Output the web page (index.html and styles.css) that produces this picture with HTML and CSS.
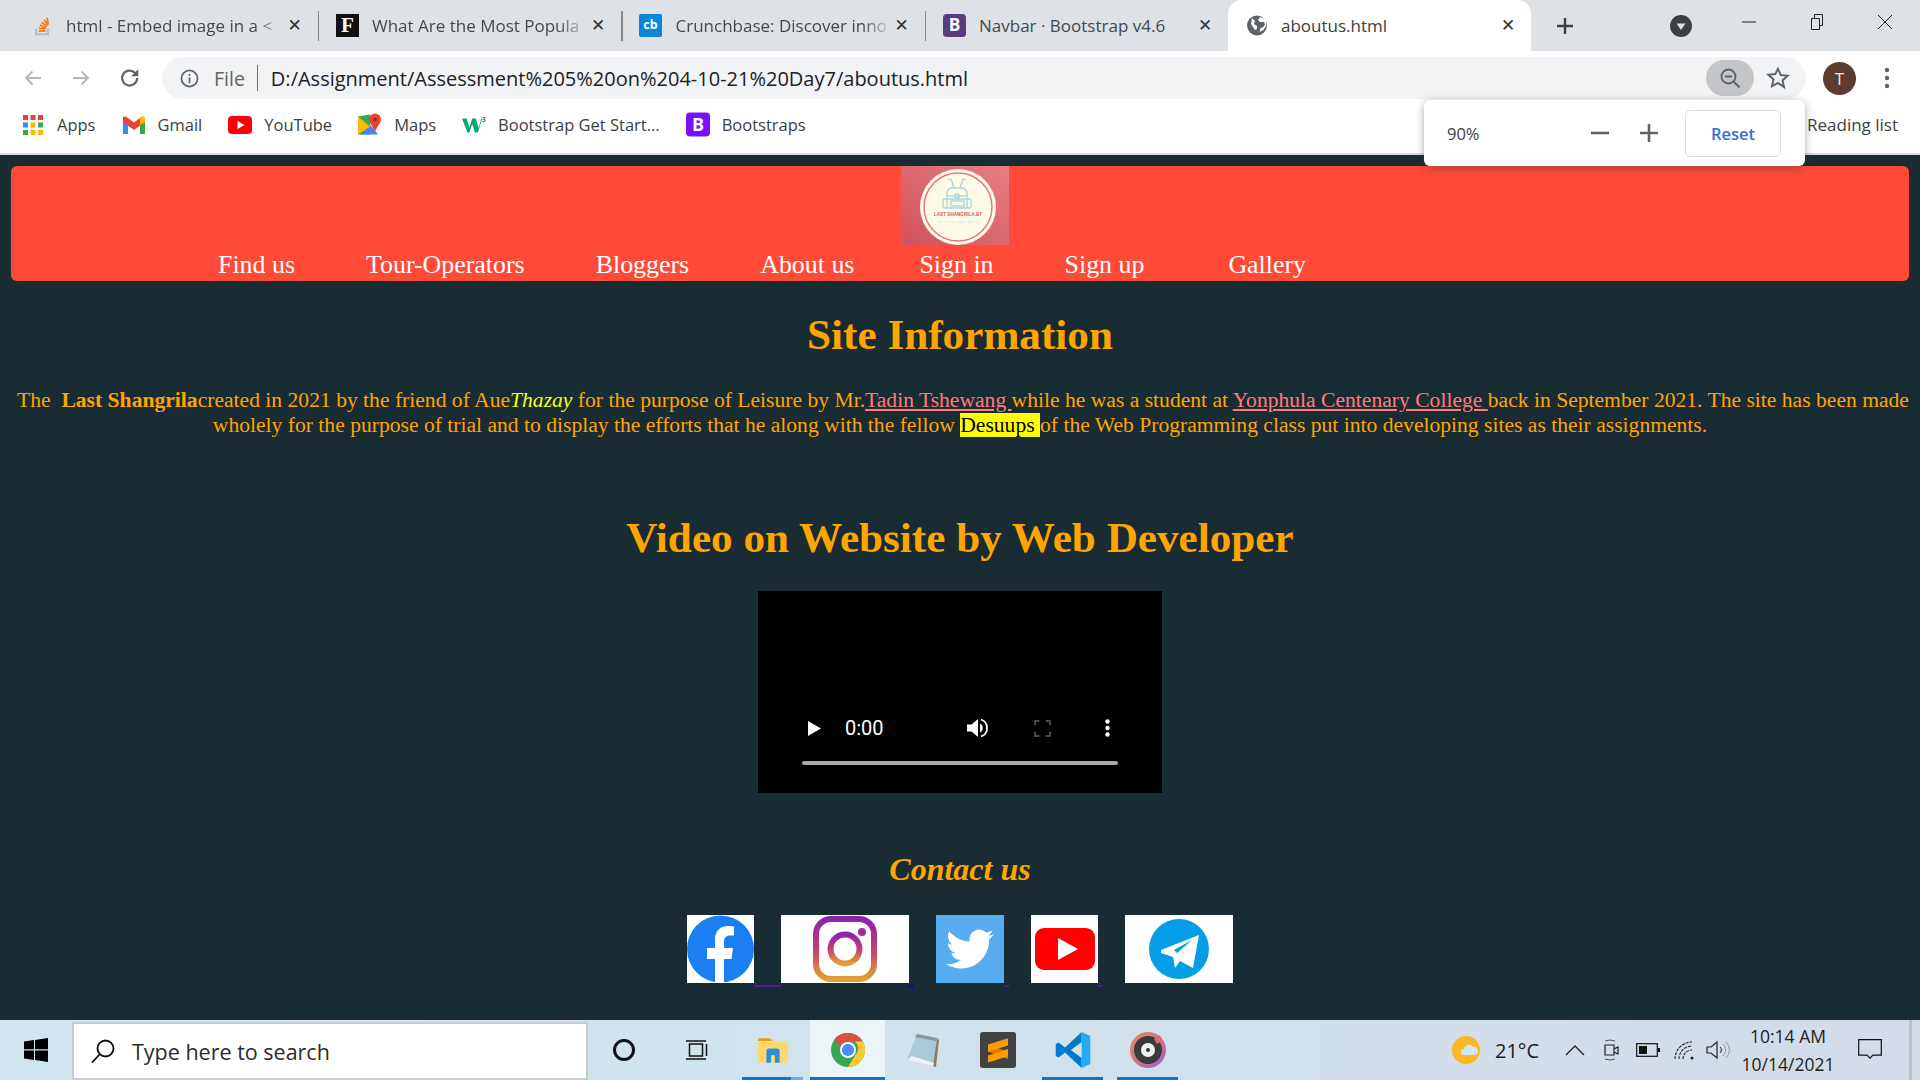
FILE: index.html
```html
<!DOCTYPE html>
<html lang="en">
<head>
<meta charset="utf-8">
<title>aboutus.html</title>
<link rel="stylesheet" href="styles.css">
</head>
<body>
<header class="chrome">
  <div class="tabstrip">
    <div class="tab">
      <svg class="fav" viewBox="0 0 24 24"><path d="M5 15v7h14v-7" fill="none" stroke="#bcbbbb" stroke-width="2.4"/><path d="M8 18h8M8.300 14.500l8 1M9.500 11l7.500 3.200M11.500 7.500l6.500 4.800M14.500 4.500l4.800 6.500M18 2l1.500 8" stroke="#f48024" stroke-width="2.200" fill="none"/></svg>
      <span class="tab-title">html - Embed image in a &lt;</span><span class="x">✕</span>
    </div>
    <span class="tab-sep"></span>
    <div class="tab">
      <svg class="fav big" viewBox="0 0 24 24"><rect width="24" height="24" fill="#111"/><text x="12" y="19" text-anchor="middle" class="fav-f">F</text></svg>
      <span class="tab-title">What Are the Most Popula</span><span class="x">✕</span>
    </div>
    <span class="tab-sep"></span>
    <div class="tab">
      <svg class="fav big" viewBox="0 0 24 24"><rect width="24" height="24" rx="2" fill="#0a86d8"/><text x="12" y="16" text-anchor="middle" class="fav-cb">cb</text></svg>
      <span class="tab-title">Crunchbase: Discover inno</span><span class="x">✕</span>
    </div>
    <span class="tab-sep"></span>
    <div class="tab">
      <svg class="fav big" viewBox="0 0 24 24"><rect width="24" height="24" rx="4" fill="#563d7c"/><text x="12" y="18" text-anchor="middle" class="fav-b">B</text></svg>
      <span class="tab-title plain">Navbar · Bootstrap v4.6</span><span class="x">✕</span>
    </div>
    <div class="tab active">
      <svg class="fav globe" viewBox="0 0 20 20"><circle cx="10" cy="10" r="10" fill="#5f6368"/><path d="M5 2.500l3 3-1 3 3 2v3l-2 1-4-6zM13 1.500l-2 3 2 2 4 0 1 2-1.500 3-3 1-1 4 4-2 3-5-1-6z" fill="#fff"/></svg>
      <span class="tab-title plain">aboutus.html</span><span class="x">✕</span>
    </div>
    <span class="newtab">
      <svg viewBox="0 0 18 18" width="18" height="18"><path d="M9 1v16M1 9h16" stroke="#3c4043" stroke-width="2.400"/></svg>
    </span>
    <span class="strip-space"></span>
    <svg class="tabsearch" viewBox="0 0 22 22"><circle cx="11" cy="11" r="11" fill="#3c4043"/><path d="M6.500 8.500h9L11 15z" fill="#dee1e6"/></svg>
    <div class="winctl">
      <svg viewBox="0 0 16 16" width="16" height="16"><path d="M1 8h14" stroke="#222" stroke-width="1"/></svg>
      <svg viewBox="0 0 16 18" width="16" height="18"><path d="M2.500 5.500h8v11h-8zM5.500 5.500v-4h8v11h-3" fill="none" stroke="#222" stroke-width="1"/></svg>
      <svg viewBox="0 0 16 16" width="16" height="16"><path d="M1 1l14 14M15 1L1 15" stroke="#222" stroke-width="1"/></svg>
    </div>
  </div>
  <div class="toolbar">
    <svg class="nav-ico" viewBox="0 0 20 20"><path d="M18 10H3M9.500 3.500L3 10l6.500 6.500" fill="none" stroke="#b4b7bb" stroke-width="1.800"/></svg>
    <svg class="nav-ico" viewBox="0 0 20 20"><path d="M2 10h15M10.500 3.500L17 10l-6.500 6.500" fill="none" stroke="#b4b7bb" stroke-width="1.800"/></svg>
    <svg class="nav-ico" viewBox="0 0 20 20"><path d="M16.500 10a6.800 6.800 0 1 1-2-4.800L17 7.700" fill="none" stroke="#5f6368" stroke-width="2"/><path d="M17.500 2v6.500H11z" fill="#5f6368"/></svg>
    <div class="omnibox">
      <svg class="info" viewBox="0 0 20 20"><circle cx="10" cy="10" r="8.500" fill="none" stroke="#5f6368" stroke-width="1.800"/><path d="M10 9v6M10 5.200v2" stroke="#5f6368" stroke-width="1.800"/></svg>
      <span class="file">File</span>
      <span class="omni-sep"></span>
      <span class="url">D:/Assignment/Assessment%205%20on%204-10-21%20Day7/aboutus.html</span>
      <span class="zoom-pill">
        <svg viewBox="0 0 22 22" width="22" height="22"><circle cx="9.500" cy="9.500" r="7" fill="none" stroke="#5f6368" stroke-width="1.800"/><path d="M6 9.500h7M14.500 14.500l6 6" stroke="#5f6368" stroke-width="1.800"/></svg>
      </span>
      <svg class="star" viewBox="0 0 24 24"><path d="M12 2.800l2.800 6.300 6.800.7-5.100 4.600 1.500 6.700L12 17l-6 3.100 1.500-6.700-5.100-4.600 6.800-.7z" fill="none" stroke="#5f6368" stroke-width="2"/></svg>
    </div>
    <span class="avatar">T</span>
    <svg class="menu" viewBox="0 0 6 22"><circle cx="3" cy="3" r="2.200" fill="#5f6368"/><circle cx="3" cy="11" r="2.200" fill="#5f6368"/><circle cx="3" cy="19" r="2.200" fill="#5f6368"/></svg>
  </div>
  <div class="bookmarks">
    <span class="bm">
      <svg class="bm-ico" viewBox="0 0 20 20"><g fill="#ea4335"><rect x="0" y="0" width="5" height="5"/><rect x="7.500" y="0" width="5" height="5"/><rect x="15" y="0" width="5" height="5"/></g><g fill="#4285f4"><rect x="0" y="7.500" width="5" height="5"/></g><rect x="7.500" y="7.500" width="5" height="5" fill="#fbbc04"/><rect x="15" y="7.500" width="5" height="5" fill="#34a853"/><rect x="0" y="15" width="5" height="5" fill="#34a853"/><rect x="7.500" y="15" width="5" height="5" fill="#fbbc04"/><rect x="15" y="15" width="5" height="5" fill="#fbbc04"/></svg>Apps</span>
    <span class="bm">
      <svg class="bm-ico wide" viewBox="0 0 24 18"><path d="M1 4v14h5V8z" fill="#4285f4"/><path d="M18 8v10h5V4z" fill="#34a853"/><path d="M1 1v5l11 8 11-8V1l-3-.5-8 6-8-6z" fill="#ea4335"/><path d="M18 1v8l5-3V1z" fill="#fbbc04"/></svg>Gmail</span>
    <span class="bm">
      <svg class="bm-ico wide" viewBox="0 0 24 18"><rect width="24" height="18" rx="4" fill="#f00"/><path d="M9.500 5l7 4-7 4z" fill="#fff"/></svg>YouTube</span>
    <span class="bm">
      <svg class="bm-ico tall" viewBox="0 0 24 24"><path d="M0 4l12-2v20H0z" fill="#34a853"/><path d="M2 22l10-10 8 10z" fill="#4285f4"/><path d="M0 4l12 10-12 8z" fill="#fbbc04"/><circle cx="17" cy="7" r="6" fill="#ea4335"/><circle cx="17" cy="7" r="2" fill="#a52714"/><path d="M12 10l5 9 5-9z" fill="#ea4335"/></svg>Maps</span>
    <span class="bm">
      <svg class="bm-ico wide" viewBox="0 0 26 20"><path d="M0 3h5l3 10 3-10h4l3 10 3-10h-1v0h2l-5 15h-3l-3-9-3 9H6z" fill="#04aa6d"/><text x="21" y="7" class="fav-w3">3</text></svg>Bootstrap Get Start...</span>
    <span class="bm">
      <svg class="bm-ico tall" viewBox="0 0 24 24"><rect width="24" height="24" rx="4" fill="#7a10f7"/><text x="12" y="18" text-anchor="middle" class="fav-b">B</text></svg>Bootstraps</span>
    <span class="strip-space"></span>
    <span class="reading">Reading list</span>
  </div>
  <div class="zoom-pop">
    <span class="zoom-val">90%</span>
    <svg class="zoom-btn" viewBox="0 0 20 20"><path d="M1 10h18" stroke="#5f6368" stroke-width="2.600"/></svg>
    <svg class="zoom-btn" viewBox="0 0 20 20"><path d="M1 10h18M10 1v18" stroke="#5f6368" stroke-width="2.600"/></svg>
    <span class="reset">Reset</span>
  </div>
</header>

<main class="page">
  <nav class="site-nav">
    <div class="logo-row">
      <svg class="logo" viewBox="0 0 108 79">
        <defs><linearGradient id="lg" x1="0" y1="1" x2="1" y2="0"><stop offset="0" stop-color="#d2515c"/><stop offset="1" stop-color="#e67f82"/></linearGradient></defs>
        <rect width="108" height="79" fill="url(#lg)"/>
        <circle cx="57" cy="41" r="38" fill="#fdfbe8"/>
        <circle cx="57" cy="41" r="34" fill="none" stroke="#e0787c" stroke-width="1.500"/>
        <g fill="none" stroke="#a9d5dc" stroke-width="1.300">
          <path d="M47 14l3-1 3 9M65 14l-3-1-3 9"/>
          <path d="M46 42V27a5 5 0 0 1 5-5h10a5 5 0 0 1 5 5v15"/>
          <path d="M46 30h20"/>
          <rect x="42" y="33" width="28" height="9" rx="1.500"/>
          <circle cx="56" cy="30" r="2.200"/>
          <rect x="50" y="35" width="13" height="5"/>
        </g>
        <text x="57" y="50" text-anchor="middle" textLength="48" class="logo-t1">LAST SHANGRILA.BT</text>
        <text x="57" y="56.500" text-anchor="middle" textLength="40" class="logo-t2">on to the next place</text>
      </svg>
    </div>
    <ul class="nav-links">
      <li class="l-std">Find us</li>
      <li class="l-std">Tour-Operators</li>
      <li class="l-std">Bloggers</li>
      <li class="l-about">About us</li>
      <li class="l-std">Sign in</li>
      <li class="l-signup">Sign up</li>
      <li>Gallery</li>
    </ul>
  </nav>

  <h1 class="h-site">Site Information</h1>
  <p class="intro">The &nbsp;<b>Last Shangrila</b>created in 2021 by the friend of Aue<i class="thazay">Thazay</i> for the purpose of Leisure by Mr.<a class="pink">Tadin Tshewang </a>while he was a student at <a class="pink">Yonphula Centenary College </a>back in September 2021. The site has been made wholely for the purpose of trial and to display the efforts that he along with the fellow <mark>Desuups </mark>of the Web Programming class put into developing sites as their assignments.</p>
  <h1 class="h-video">Video on Website by Web Developer</h1>

  <div class="video">
    <div class="controls">
      <svg class="c-play" viewBox="0 0 13 15"><path d="M0 0l13 7.500L0 15z" fill="#fff"/></svg>
      <span class="c-time">0:00</span>
      <span class="strip-space"></span>
      <svg class="c-vol" viewBox="0 0 22 22"><path d="M0 7.500h4.500L11 2v18l-6.500-5.500H0z" fill="#fff"/><path d="M13 6.500a5 5 0 0 1 0 9z" fill="#fff"/><path d="M14 2.500a9 9 0 0 1 0 17" fill="none" stroke="#fff" stroke-width="1.800"/></svg>
      <svg class="c-full" viewBox="0 0 16 16"><path d="M1 5V1h4M11 1h4v4M15 11v4h-4M5 15H1v-4" fill="none" stroke="#4a4a4a" stroke-width="1.800"/></svg>
      <svg class="c-more" viewBox="0 0 5 18"><circle cx="2.500" cy="2.500" r="2.200" fill="#fff"/><circle cx="2.500" cy="9" r="2.200" fill="#fff"/><circle cx="2.500" cy="15.500" r="2.200" fill="#fff"/></svg>
    </div>
    <div class="track"></div>
  </div>

  <h2 class="h-contact">Contact us</h2>
  <div class="socials">
    <svg class="s-fb" viewBox="0 0 67 68"><rect width="67" height="68" fill="#fff"/><circle cx="33.500" cy="34" r="33.500" fill="#1b7ef2"/><path d="M28 68V44h-8V33h8v-8c0-9 5-14 13-14 3 0 6 .5 6 .5v9h-4c-4 0-6 2.500-6 6V33h9l-1.500 11H37v24z" fill="#fff"/></svg>
    <span class="gap"><span class="ul purple full"></span></span>
    <svg class="s-ig" viewBox="0 0 128 68"><defs><linearGradient id="ig" x1="0" y1="1" x2="0" y2="0"><stop offset="0" stop-color="#e3a032"/><stop offset=".45" stop-color="#c8456a"/><stop offset=".8" stop-color="#a82a99"/><stop offset="1" stop-color="#8a25b0"/></linearGradient></defs><rect width="128" height="68" fill="#fff"/><rect x="35" y="4" width="58" height="60" rx="15" fill="none" stroke="url(#ig)" stroke-width="6"/><circle cx="64" cy="34" r="14.500" fill="none" stroke="url(#ig)" stroke-width="6"/><circle cx="81" cy="17" r="4" fill="#a02aa0"/></svg>
    <span class="gap"><span class="ul blue"></span></span>
    <svg class="s-tw" viewBox="0 0 68 68"><rect width="68" height="68" fill="#55acee"/><g transform="translate(10 10) scale(2)"><path d="M23.953 4.570a10 10 0 01-2.825.775 4.958 4.958 0 002.163-2.723c-.951.555-2.005.959-3.127 1.184a4.920 4.920 0 00-8.384 4.482C7.690 8.095 4.067 6.130 1.640 3.162a4.822 4.822 0 00-.666 2.475c0 1.710.870 3.213 2.188 4.096a4.904 4.904 0 01-2.228-.616v.060a4.923 4.923 0 003.946 4.827 4.996 4.996 0 01-2.212.085 4.936 4.936 0 004.604 3.417 9.867 9.867 0 01-6.102 2.105c-.390 0-.779-.023-1.170-.067a13.995 13.995 0 007.557 2.209c9.053 0 13.998-7.496 13.998-13.985 0-.210 0-.420-.015-.630A9.935 9.935 0 0024 4.590z" fill="#fff"/></g></svg>
    <span class="gap"><span class="ul purple"></span></span>
    <svg class="s-yt" viewBox="0 0 67 68"><rect width="67" height="68" fill="#fff"/><rect x="4" y="13" width="60" height="42" rx="9" fill="#f00"/><path d="M27 23l20 11-20 11z" fill="#fff"/></svg>
    <span class="gap"><span class="ul purple"></span></span>
    <svg class="s-tg" viewBox="0 0 108 68"><rect width="108" height="68" fill="#fff"/><circle cx="54" cy="34" r="30" fill="#059de6"/><path d="M36 35l38-15-6 33-13-7-5 7-2-11-12-4zm16 3l15-13-18 10z" fill="#fff"/></svg>
  </div>
</main>

<footer class="taskbar">
  <svg class="win" viewBox="0 0 24 24"><path d="M0 3.500l10-1.400V11.300H0zM11 2l13-2v11.300H11zM0 12.500h10v9.400L0 20.500zM11 12.500h13V24l-13-2z" fill="#000"/></svg>
  <div class="searchbox">
    <svg class="mag" viewBox="0 0 24 24"><circle cx="14.500" cy="9.500" r="8" fill="none" stroke="#111" stroke-width="1.800"/><path d="M9 15L1 23.500" stroke="#111" stroke-width="1.800"/></svg>
    <span>Type here to search</span>
  </div>
  <span class="cortana"></span>
  <svg class="taskview" viewBox="0 0 24 22"><rect x="3.500" y="5" width="13" height="12" fill="none" stroke="#111" stroke-width="1.500"/><path d="M0 2h20M0 20h20M20.500 5v12" stroke="#111" stroke-width="1.500"/></svg>
  <span class="tb-app open first">
    <svg viewBox="0 0 34 28" width="32" height="27"><path d="M1 3a2 2 0 0 1 2-2h11l3 3H1z" fill="#e0a21c"/><rect x="1" y="5" width="32" height="22" rx="2" fill="#ffd76a"/><path d="M10 27V15a3 3 0 0 1 3-3h8a3 3 0 0 1 3 3v12h-5v-8h-4v8z" fill="#2a8fdc"/></svg>
  </span>
  <span class="tb-app open active">
    <svg viewBox="0 0 36 36" width="34" height="34"><circle cx="18" cy="18" r="18" fill="#34a853"/><path d="M18 0a18 18 0 0 1 15.600 9H18a9 9 0 0 0-8.500 6L3.500 6.500A18 18 0 0 1 18 0z" fill="#dd5044"/><path d="M33.600 9A18 18 0 0 1 18 36l8-13a9 9 0 0 0-1-14z" fill="#fdc934"/><circle cx="18" cy="18" r="8.500" fill="#fff"/><circle cx="18" cy="18" r="6.500" fill="#4f8af5"/></svg>
  </span>
  <span class="tb-app">
    <svg viewBox="0 0 36 36" width="36" height="36"><path d="M12 2l20 4-4 28L2 28z" fill="#a7c9d8"/><path d="M12 2l20 4-1 3-21-4z" fill="#8f979c"/><path d="M28 34l4-28 2 2-3 27z" fill="#8b7b60"/><path d="M2 28l26 6 1-3-22-7z" fill="#eef4f6"/></svg>
  </span>
  <span class="tb-app">
    <svg viewBox="0 0 36 40" width="36" height="36" preserveAspectRatio="none"><rect width="36" height="40" rx="3" fill="#424242"/><path d="M8 14l20 8v8L8 22z" fill="#d97f00"/><path d="M8 14l20-7v8L8 22z" fill="#ff9a00"/><path d="M8 26l20-7v8L8 34z" fill="#ff9a00"/></svg>
  </span>
  <span class="tb-app open">
    <svg viewBox="0 0 100 100" width="36" height="36" preserveAspectRatio="none"><path d="M74 0L28 43 10 29 2 33v34l8 4 18-14 46 43V72L44 50l30-22z" fill="#007acc"/><path d="M74 0l24 11v78l-24 11z" fill="#24a9f2"/></svg>
  </span>
  <span class="tb-app open">
    <svg viewBox="0 0 36 36" width="36" height="36"><defs><linearGradient id="gr" x1="0" y1="0" x2="1" y2="1"><stop offset="0" stop-color="#f48a4a"/><stop offset="1" stop-color="#9b63c9"/></linearGradient></defs><circle cx="18" cy="18" r="18" fill="url(#gr)"/><circle cx="18" cy="18" r="14" fill="#3a3a3a"/><circle cx="18" cy="18" r="7" fill="#f2f2f2"/><circle cx="18" cy="18" r="2" fill="#333"/><path d="M24 7l6-4 2 6-5 3z" fill="#e06a6a"/></svg>
  </span>
  <span class="strip-space"></span>
  <div class="tray">
    <svg class="weather" viewBox="0 0 30 30"><circle cx="14" cy="15" r="14" fill="#fbb726"/><path d="M12 20a3 3 0 0 1 0-6 5 5 0 0 1 9-2 4 4 0 0 1 5 4 4 4 0 0 1-3 4z" fill="#cfe8f7"/></svg>
    <span class="temp">21°C</span>
    <svg class="t-chev" viewBox="0 0 20 12"><path d="M1 11l9-9 9 9" fill="none" stroke="#222" stroke-width="1.300"/></svg>
    <svg class="t-ico" viewBox="0 0 18 24"><path d="M3 7h9v10H3zM12 11l4-2v7l-4-2" fill="none" stroke="#222" stroke-width="1.200"/><path d="M3 3q5-2 10 0M3 21q5 2 10 0" fill="none" stroke="#555" stroke-width="1"/></svg>
    <svg class="t-bat" viewBox="0 0 24 14"><rect x=".7" y=".7" width="20.600" height="12.600" fill="none" stroke="#111" stroke-width="1.200"/><rect x="3" y="3" width="8" height="8" fill="#111"/><rect x="22" y="5" width="2" height="4" fill="#111"/></svg>
    <svg class="t-wifi" viewBox="0 0 22 20"><path d="M1 19a17 17 0 0 1 17-17M5 19a13 13 0 0 1 13-13M9 19a9 9 0 0 1 9-9" fill="none" stroke="#333" stroke-width="1.200" stroke-dasharray="3 1"/><circle cx="18" cy="18" r="1.500" fill="#222"/></svg>
    <svg class="t-vol" viewBox="0 0 24 20"><path d="M1 7h4l6-5v16l-6-5H1z" fill="none" stroke="#222" stroke-width="1.200"/><path d="M14 7a4 4 0 0 1 0 6" fill="none" stroke="#222" stroke-width="1"/><path d="M17 4a8 8 0 0 1 0 12M20 2a11 11 0 0 1 0 16" fill="none" stroke="#999" stroke-width="1"/></svg>
    <div class="clock"><span>10:14 AM</span><span>10/14/2021</span></div>
    <svg class="t-note" viewBox="0 0 24 22"><path d="M.7.7h22.600v15.500H15l-3 3-3-3H.7z" fill="none" stroke="#111" stroke-width="1.200"/></svg>
  </div>
  <span class="show-desktop"></span>
</footer>
</body>
</html>
```

FILE: styles.css
```css
* { box-sizing: border-box; }
html, body { margin: 0; padding: 0; }
body {
  width: 1920px;
  height: 1080px;
  overflow: hidden;
  display: flex;
  flex-direction: column;
  background: #192b33;
  font-family: "Liberation Serif", "Times New Roman", serif;
}
.strip-space { flex: 1; }

/* browser chrome */
.chrome {
  position: relative;
  height: 155px;
  flex: none;
  background: #fff;
  border-bottom: 2px solid #dadce0;
  font-family: "Open Sans", "Noto Sans", sans-serif;
  color: #3c4043;
  z-index: 2;
}
.tabstrip {
  height: 51px;
  background: #dee1e6;
  display: flex;
  align-items: stretch;
  padding-left: 14px;
}
.tab {
  width: 303.500px;
  display: flex;
  align-items: center;
  padding: 0 15px 0 18px;
  font-size: 17px;
  color: #45494d;
}
.tab-sep { width: 1.500px; height: 30px; background: #85888c; align-self: center; margin-right: -1.500px; }
.tab.active {
  background: #fff;
  border-radius: 14px 14px 0 0;
  width: 303px;
  color: #3c4043;
}
.fav { width: 20px; height: 24px; flex: none; margin-right: 14px; }
.fav.big { width: 23px; height: 25px; margin-right: 13.500px; }
.fav.globe { width: 20px; height: 21px; margin-left: 1px; margin-right: 14px; }
.fav-f { font: bold 22px "Liberation Serif", serif; fill: #fff; }
.fav-cb { font: bold 13px "Open Sans", sans-serif; fill: #fff; }
.fav-b { font: bold 18px "Open Sans", sans-serif; fill: #fff; }
.fav-w3 { font: bold 8px "Open Sans", sans-serif; fill: #04aa6d; }
.tab-title {
  flex: 1;
  white-space: nowrap;
  -webkit-mask-image: linear-gradient(90deg, #000 85%, transparent);
  mask-image: linear-gradient(90deg, #000 85%, transparent);
}
.tab-title.plain { -webkit-mask-image: none; mask-image: none; }
.x { flex: none; width: 16px; font-size: 17px; font-weight: 700; color: #2f3235; text-align: center; font-family: "DejaVu Sans", sans-serif; line-height: 1; }
.newtab { width: 68px; display: flex; align-items: center; justify-content: center; margin-left: 0; }
.tabsearch { width: 22px; height: 24px; align-self: center; margin-right: 48px; }
.winctl { display: flex; align-items: center; gap: 52px; width: 180px; padding-right: 27px; justify-content: flex-end; margin-bottom: 8px; flex: none; }

.toolbar {
  height: 54px;
  display: flex;
  align-items: center;
  padding-left: 23px;
  background: #fff;
}
.nav-ico { width: 20px; height: 20px; margin-right: 28px; flex: none; }
.nav-ico:nth-child(3) { width: 22px; height: 22px; margin-right: 21px; }
.omnibox {
  width: 1644px;
  height: 42px;
  background: #f1f3f4;
  border-radius: 21px;
  display: flex;
  align-items: center;
  padding: 0 16px 0 18px;
  flex: none;
}
.info { width: 19px; height: 19px; flex: none; margin-right: 15px; }
.file { font-size: 19.500px; color: #5f6368; }
.omni-sep { width: 1px; height: 26px; background: #6d7175; margin: 0 13px 0 12px; }
.url { font-size: 20px; color: #202124; white-space: nowrap; flex: 1; }
.zoom-pill {
  width: 48px; height: 36px; border-radius: 18px; background: #c3c5c7;
  display: flex; align-items: center; justify-content: center; flex: none; margin-right: 12px;
}
.star { width: 24px; height: 24px; flex: none; }
.avatar {
  width: 33px; height: 33px; border-radius: 50%; background: #5d3b30; color: #f1e6e0;
  display: flex; align-items: center; justify-content: center; font-size: 17px;
  margin-left: 17px; flex: none;
}
.menu { width: 6px; height: 22px; margin-left: 28px; flex: none; }

.bookmarks {
  height: 48px;
  display: flex;
  align-items: center;
  padding: 0 0 9px 23px;
  font-size: 16.500px;
  color: #3c4043;
  white-space: nowrap;
}
.bm { display: flex; align-items: center; margin-right: 26px; }
.bm-ico { width: 20px; height: 20px; margin-right: 14px; flex: none; }
.bm-ico.wide { width: 24px; height: 20px; margin-right: 12px; }
.bm-ico.tall { width: 24px; height: 25px; margin-right: 12px; }
.reading { padding-right: 22px; font-size: 17px; }

.zoom-pop {
  position: absolute;
  left: 1424px;
  top: 100px;
  width: 381px;
  height: 66px;
  background: #fff;
  border-radius: 6px;
  box-shadow: 0 2px 8px rgba(60, 64, 67, .45);
  display: flex;
  align-items: center;
  padding: 0 24px 0 23px;
  font-size: 16.500px;
}
.zoom-val { flex: 1; color: #3c4043; }
.zoom-btn { width: 20px; height: 20px; margin-right: 29px; flex: none; }
.reset {
  width: 96px; height: 47px; border: 1px solid #dadce0; border-radius: 5px;
  display: flex; align-items: center; justify-content: center;
  color: #2f6fe0; font-weight: 600; margin-left: -3px;
}

/* page */
.page {
  flex: 1;
  min-height: 0;
  overflow: hidden;
  display: flex;
  flex-direction: column;
  align-items: center;
  color: #ffa500;
}
.site-nav {
  align-self: stretch;
  margin: 11px 11px 0;
  height: 115px;
  background: #ff4a38;
  border-radius: 6px;
  display: flex;
  flex-direction: column;
}
.logo-row { display: flex; justify-content: center; padding-right: 10px; height: 79px; }
.logo { width: 108px; height: 79px; display: block; }
.logo-t1 { font: bold 4.500px "Liberation Sans", sans-serif; fill: #d8555a; }
.logo-t2 { font: 3px "Liberation Sans", sans-serif; fill: #b9d9c5; }
.nav-links {
  list-style: none;
  margin: 0;
  padding: 5px 0 0 207px;
  display: flex;
  font-size: 25.900px;
  line-height: 29px;
  color: #fff;
  white-space: nowrap;
}
.l-std { margin-right: 71px; }
.l-about { margin-right: 65px; }
.l-signup { margin-right: 84px; }

.h-site {
  margin: 31px 0 0;
  font-size: 43.200px;
  line-height: 46px;
  font-weight: 700;
}
.intro {
  align-self: stretch;
  margin: 30px 0 0;
  padding: 0 8px;
  font-size: 21.600px;
  line-height: 25px;
  text-align: center;
  text-indent: 6px;
}
.thazay { color: #f8ff10; }
.pink { color: #ff7b7b; text-decoration: underline; }
mark { background: #ff0; color: #000; }
.h-video {
  margin: 77px 0 0;
  font-size: 43.200px;
  line-height: 46px;
  font-weight: 700;
}
.video {
  margin-top: 30px;
  width: 404px;
  height: 202px;
  flex: none;
  background: #000;
  display: flex;
  flex-direction: column;
  justify-content: flex-end;
  padding: 0 44px 28px;
}
.controls { display: flex; align-items: center; height: 30px; padding-left: 6px; margin-bottom: 18px; }
.c-play { width: 13px; height: 15px; }
.c-time { margin-left: 24px; font: 20px Roboto, sans-serif; color: #fff; }
.c-vol { width: 22px; height: 22px; }
.c-full { width: 17px; height: 17px; margin-left: 45px; }
.c-more { width: 5px; height: 18px; margin-left: 54px; margin-right: 8.500px; }
.track { height: 4px; border-radius: 2px; background: #aaa; }
.h-contact {
  margin: 59px 0 0;
  font-size: 32px;
  line-height: 34px;
  font-style: italic;
  font-weight: 700;
}
.socials { display: flex; margin-top: 29px; height: 68px; flex: none; }
.socials svg { display: block; height: 68px; flex: none; }
.s-fb, .s-yt { width: 67px; }
.s-ig { width: 128px; }
.s-tw { width: 68px; }
.s-tg { width: 108px; }
.gap { width: 27px; position: relative; }
.ul { position: absolute; left: 0; bottom: -4px; height: 2px; width: 5px; }
.ul.full { width: 27px; }
.purple { background: #551a8b; }
.blue { background: #0000ee; }

/* taskbar */
.taskbar {
  height: 60px;
  flex: none;
  display: flex;
  align-items: center;
  background: linear-gradient(90deg, #cfe6ef 0%, #d1e2ec 50%, #d3dbe8 100%);
  font-family: "Open Sans", "Noto Sans", sans-serif;
  color: #1d1d1d;
}
.win { width: 24px; height: 24px; margin-left: 24px; flex: none; }
.searchbox {
  width: 516px;
  height: 58px;
  margin-left: 24px;
  margin-top: 2px;
  background: #fff;
  border: 2px solid #c9ccce;
  display: flex;
  align-items: center;
  padding-left: 17px;
  font-size: 21.500px;
  color: #2b2b2b;
  flex: none;
}
.mag { width: 24px; height: 24px; margin-right: 17px; flex: none; }
.cortana { width: 22px; height: 22px; border: 3.500px solid #111; border-radius: 50%; margin-left: 25px; flex: none; }
.taskview { width: 24px; height: 22px; margin-left: 51px; flex: none; }
.tb-app {
  width: 75px;
  height: 60px;
  display: flex;
  align-items: center;
  justify-content: center;
  position: relative;
  flex: none;
}
.tb-app.first { margin-left: 25px; }
.tb-app.open::after {
  content: "";
  position: absolute;
  left: 7px;
  right: 7px;
  bottom: 0;
  height: 3px;
  background: #0078d4;
}
.tb-app.first::after { background: linear-gradient(90deg, #0078d4 80%, #6caee6 80%); }
.tb-app.active { background: #ecf4f8; }
.tb-app.active::after { left: 0; right: 0; }
.tray { display: flex; align-items: center; font-size: 19px; flex: none; }
.weather { width: 30px; height: 30px; margin-right: 13px; }
.temp { width: 43px; font-size: 20px; white-space: nowrap; }
.t-chev { width: 20px; height: 12px; margin-left: 27px; }
.t-ico { width: 18px; height: 24px; margin-left: 16.500px; }
.t-bat { width: 24px; height: 14px; margin-left: 16px; }
.t-wifi { width: 22px; height: 20px; margin-left: 14px; }
.t-vol { width: 24px; height: 20px; margin-left: 10.500px; }
.clock {
  width: 100px;
  margin-left: 8px;
  display: flex;
  flex-direction: column;
  align-items: center;
  gap: 4px;
  font-size: 17.500px;
  line-height: 24px;
  white-space: nowrap;
}
.t-note { width: 24px; height: 22px; margin-left: 20px; margin-right: 27px; }
.show-desktop { width: 3px; height: 60px; background: #b9c0c9; margin-right: 8px; flex: none; }
```
